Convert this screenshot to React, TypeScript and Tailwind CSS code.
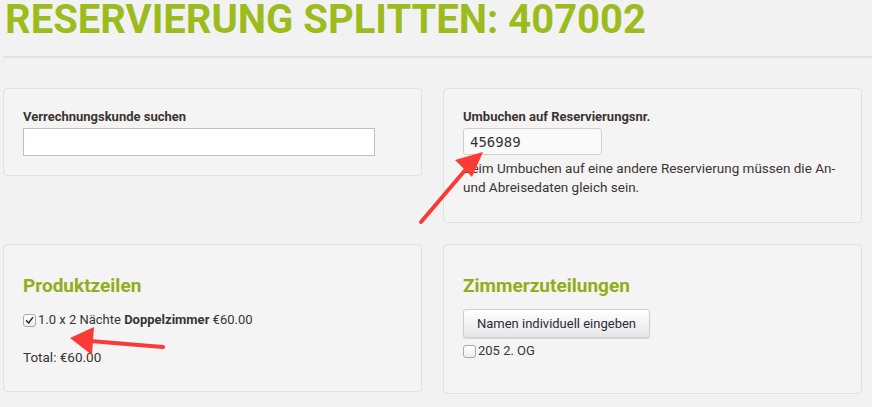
import React from 'react';

// Split reservation screen

const Panel: React.FC<{ className?: string; children: React.ReactNode }> = ({ className = '', children }) => (
  <div className={`rounded-[4px] border border-[#e0e0e0] bg-[#f4f4f4] px-[19px] ${className}`}>{children}</div>
);

const Check: React.FC<{ checked?: boolean }> = ({ checked }) => (
  <span className="flex h-[13px] w-[13px] shrink-0 items-center justify-center rounded-[3px] border border-[#a9a9a9] bg-gradient-to-b from-white to-[#ededed]">
    {checked && (
      <svg width="9" height="9" viewBox="0 0 9 9">
        <path d="M1.5 4.8 L3.6 7 L7.6 1.6" fill="none" stroke="#222" strokeWidth="1.4" strokeLinecap="round" strokeLinejoin="round" />
      </svg>
    )}
  </span>
);

export default function App() {
  return (
    <div
      className="relative h-[407px] w-[872px] overflow-hidden bg-[#f2f2f2] text-[#3b3431]"
      style={{ fontFamily: 'Roboto, "Open Sans", sans-serif' }}
    >
      <h1 className="pl-[5px] text-[40px] font-bold leading-none text-[#9cbc1e]">
        RESERVIERUNG SPLITTEN: 407002
      </h1>
      <div className="ml-[3px] mt-[16px] border-t-2 border-[#e2e2e2]" />

      <div className="ml-[3px] mt-[30px] grid grid-cols-[419px_419px] items-start gap-x-[21px] gap-y-[21px]">
        {/* Billing customer search */}
        <Panel className="pb-[19px] pt-[18px]">
          <label className="block text-[13px] font-bold leading-[20px]">Verrechnungskunde suchen</label>
          <input
            type="text"
            className="mt-[1px] block h-[28px] w-[352px] border border-[#c4bebe] bg-white outline-none"
          />
        </Panel>

        {/* Rebook onto other reservation */}
        <Panel className="pb-[25px] pt-[18px]">
          <label className="block text-[13px] font-bold leading-[20px]">Umbuchen auf Reservierungsnr.</label>
          <input
            type="text"
            defaultValue="456989"
            className="mt-[1px] block h-[27px] w-[139px] rounded-[3px] border border-[#cfcfcf] bg-[#fafafa] px-[6px] text-[14px] text-[#333] outline-none"
            style={{ fontFamily: '"DejaVu Sans Mono", monospace' }}
          />
          <p className="mt-[4px] text-[13.5px] leading-[19px]">
            Beim Umbuchen auf eine andere Reservierung müssen die An-
            <br />
            und Abreisedaten gleich sein.
          </p>
        </Panel>

        {/* Product lines */}
        <Panel className="h-[148px] pt-[28px]">
          <h2 className="text-[19px] font-bold leading-[26px] text-[#8fae18]">Produktzeilen</h2>
          <label className="mt-[12px] flex items-center gap-[2px] text-[13px] leading-[18px]">
            <Check checked />
            <span>
              1.0 x 2 Nächte <b>Doppelzimmer</b> €60.00
            </span>
          </label>
          <p className="mt-[19px] text-[13.5px] leading-[18px]">Total: €60.00</p>
        </Panel>

        {/* Room assignment */}
        <Panel className="h-[150px] pt-[28px]">
          <h2 className="text-[19px] font-bold leading-[26px] text-[#8fae18]">Zimmerzuteilungen</h2>
          <button className="mt-[10px] block h-[29px] w-[187px] rounded-[3px] border border-[#cfcfcf] bg-gradient-to-b from-white to-[#e6e6e6] text-[13px] text-[#2d2b36] shadow-[0_1px_1px_rgba(0,0,0,0.12)]">
            Namen individuell eingeben
          </button>
          <label className="mt-[4px] flex items-center gap-[2px] text-[13px] leading-[18px]">
            <Check />
            <span>205 2. OG</span>
          </label>
        </Panel>
      </div>

      {/* Annotation arrows */}
      <svg className="pointer-events-none absolute left-0 top-0" width="872" height="407" viewBox="0 0 872 407">
        <line x1="421" y1="222" x2="467" y2="168" stroke="#fb3a35" strokeWidth="4" strokeLinecap="round" />
        <polygon points="483,152 455,160 472,177" fill="#fb3a35" />
        <line x1="163" y1="347" x2="90" y2="341" stroke="#fb3a35" strokeWidth="4" strokeLinecap="round" />
        <polygon points="70,338 94,327 92,355" fill="#fb3a35" />
      </svg>
    </div>
  );
}
